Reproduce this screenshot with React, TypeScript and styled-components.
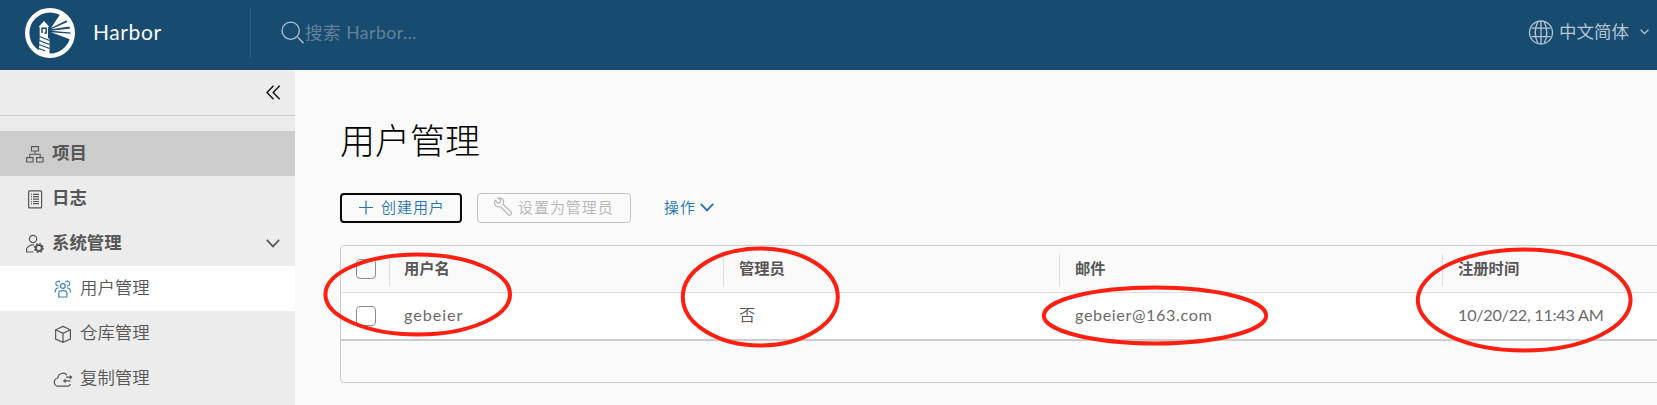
import React from 'react';
import styled, { createGlobalStyle, css } from 'styled-components';

const GlobalStyle = createGlobalStyle`
  *, *::before, *::after { box-sizing: border-box; }
  body {
    margin: 0;
    overflow: hidden;
    background: #fafafa;
    font-family: Lato, "Noto Sans CJK SC", sans-serif;
    color: #565656;
  }
`;

const Page = styled.div`
  position: relative;
  width: 100%;
  height: 405px;
  display: flex;
  flex-direction: column;
  overflow: hidden;
`;

const Header = styled.header`
  flex: none;
  height: 70px;
  display: flex;
  background: #184b70;
`;

const Brand = styled.div`
  width: 250px;
  display: flex;
  align-items: center;
  padding: 0 0 4px 25px;
  gap: 18px;
`;

const BrandName = styled.span`
  margin-top: -2px;
  font-size: 21px;
  line-height: 30px;
  letter-spacing: 0.6px;
  color: #fafafa;
`;

const Search = styled.div`
  flex: 1;
  height: 50px;
  margin-top: 8px;
  border-left: 1px solid #30608a;
  display: flex;
  align-items: center;
  padding: 0 0 1px 30px;
  font-size: 17.5px;
  color: #648299;
`;

const Placeholder = styled.span`
  line-height: 26px;
  white-space: pre;
  letter-spacing: 0.55px;
`;

const Language = styled.div`
  display: flex;
  align-items: center;
  padding: 0 8px 6px 0;
  font-size: 17.5px;
  line-height: 26px;
  color: #b5c5d1;
`;

const LanguageName = styled.span`
  margin: 0 11px 0 5px;
`;

const Body = styled.div`
  flex: 1;
  display: flex;
  min-height: 0;
`;

const Sidebar = styled.nav`
  flex: none;
  width: 295px;
  background: #ececec;
`;

const Collapse = styled.div`
  height: 46px;
  margin-bottom: 15px;
  border-bottom: 1px solid #cccccc;
  display: flex;
  align-items: center;
  justify-content: flex-end;
  padding-right: 14px;
  color: #111;
`;

const NavItem = styled.a<{ $level?: number; $state?: 'hover' | 'active' }>`
  height: 45px;
  display: flex;
  align-items: center;
  font-size: 17.4px;
  line-height: 26px;
  color: #565656;
  ${({ $level }) =>
    $level === 2
      ? css`padding-left: 52px; font-weight: 350;`
      : css`padding-left: 25px; font-weight: 700;`}
  ${({ $state }) => $state === 'hover' && css`background: #cccccc;`}
  ${({ $state }) => $state === 'active' && css`background: #ffffff;`}
`;

const NavIcon = styled.span<{ $blue?: boolean; $gap?: number }>`
  display: flex;
  width: 20px;
  margin-right: ${({ $gap = 7 }) => $gap}px;
  color: ${({ $blue }) => ($blue ? '#3b83c0' : '#565656')};
`;

const NavLabel = styled.span`
  flex: 1;
  padding-bottom: 1px;
`;

const NavCaret = styled.span`
  display: flex;
  padding-right: 15px;
`;

const Main = styled.main`
  flex: 1;
  min-width: 0;
  padding: 45px 0 0 45px;
`;

const Title = styled.h1`
  margin: 0;
  height: 50px;
  font-size: 35px;
  line-height: 50px;
  font-weight: 300;
  color: #000;
`;

const Toolbar = styled.div`
  display: flex;
  margin-top: 28px;
  height: 30px;
`;

const Button = styled.button<{ $kind?: 'focused' | 'disabled' | 'link' }>`
  height: 30px;
  display: flex;
  align-items: center;
  background: transparent;
  font-family: inherit;
  font-size: 15px;
  line-height: 24px;
  font-weight: 350;
  letter-spacing: 0.95px;
  border-radius: 4px;
  color: #2573b8;
  padding: 0 0 2px;
  ${({ $kind }) => $kind === 'focused' && css`
    width: 122px;
    border: 2px solid #0a0a0a;
    padding-left: 15px;
    gap: 6px;
  `}
  ${({ $kind }) => $kind === 'disabled' && css`
    width: 154px;
    margin-left: 15px;
    border: 1px solid #c1c1c1;
    padding-left: 15px;
    gap: 5px;
    color: #b5b5b5;
  `}
  ${({ $kind }) => $kind === 'link' && css`
    margin-left: 33px;
    border: 0;
    gap: 4px;
  `}
`;

const Grid = styled.div`
  height: 138px;
  margin-top: 22px;
  width: 1330px;
  border: 1px solid #cccccc;
  border-radius: 4px;
`;

const Row = styled.div<{ $head?: boolean }>`
  display: grid;
  grid-template-columns: 48px 334px 336px 383px 1fr;
  height: ${({ $head }) => ($head ? '47px' : '48px')};
  background: ${({ $head }) => ($head ? 'transparent' : '#ffffff')};
  border-bottom: ${({ $head }) => ($head ? '1px solid #dedede' : '2px solid #cccccc')};
  font-weight: ${({ $head }) => ($head ? 700 : 350)};
  font-size: ${({ $head }) => ($head ? '15.3px' : '16.2px')};
`;

const Check = styled.span`
  width: 20px;
  height: 20px;
  margin: 13px 0 0 15px;
  border: 1px solid #8c8c8c;
  border-radius: 4px;
`;

const HeadCell = styled.div`
  height: 32px;
  margin-top: 8px;
  border-left: 1px solid #dedede;
  padding-left: 15px;
  line-height: 28px;

  &:nth-child(2) { padding-left: 14px; }
`;

const Cell = styled.div<{ $spacing?: number }>`
  padding-left: 16px;
  line-height: 44px;
  letter-spacing: ${({ $spacing = 0 }) => $spacing}px;

  &:nth-child(2) { padding-left: 15px; }
`;

const Latin = styled.span`
  font-weight: 400;
  color: #6a6a6a;
`;

const Annotations = styled.svg`
  position: absolute;
  inset: 0;
  pointer-events: none;
`;

type IconProps = {
  w: number;
  h?: number;
  box?: string;
  stroke?: number;
  children: React.ReactNode;
};

const IconSvg = styled.svg`
  flex: none;
`;

const Icon = ({ w, h = w, box = '0 0 36 36', stroke = 2, children }: IconProps) => (
  <IconSvg width={w} height={h} viewBox={box} fill="none" stroke="currentColor" strokeWidth={stroke}>
    {children}
  </IconSvg>
);

const Logo = () => (
  <svg width="50" height="50" viewBox="0 0 50 50" fill="#fff">
    <circle cx="25" cy="25" r="22.8" fill="none" stroke="#fff" strokeWidth="4.4" />
    <path d="M26 20 L35 6.5 L43 11.5 Z M26 21.3 L43.5 13.5 L46 18.3 Z M26 22.8 L46 20.5 V24.5 Z M26 24.3 L46 25.8 L45.5 31.5 Z" />
    <path d="M14 18.5 L19 13 L24 18.5 L23 19.5 V30 L24.5 31 V47 H13.5 L14.7 30 V19.5 Z" />
    <path d="M17 25 V20.3 H21.2 V25 H19.5" fill="none" stroke="#184b70" strokeWidth="1.5" />
    <path d="M14.5 28.5 L24.5 32.5 M14.3 32.5 L24.5 36.5 M14 36.5 L24.5 40.5 M14 40.5 L20 43" stroke="#184b70" strokeWidth="1.2" />
  </svg>
);

const columns = ['用户名', '管理员', '邮件', '注册时间'];

const rings = [
  { cx: 417.7, cy: 294.5, rx: 92.3, ry: 40 },
  { cx: 760.3, cy: 297, rx: 77.5, ry: 48.5 },
  { cx: 1155, cy: 315.5, rx: 111.2, ry: 28 },
  { cx: 1524.2, cy: 300, rx: 106.4, ry: 50.5 },
];

export default function App() {
  return (
    <Page>
      <GlobalStyle />
      <Header>
        <Brand>
          <Logo />
          <BrandName>Harbor</BrandName>
        </Brand>
        <Search>
          <Icon w={24} box="0 0 24 24" stroke={1.3}>
            <g stroke="#b5c5d1">
              <circle cx="9.7" cy="9.7" r="8.6" />
              <path d="M16.8 16.3 L22.5 22.3" />
            </g>
          </Icon>
          <Placeholder>搜索 Harbor...</Placeholder>
        </Search>
        <Language>
          <Icon w={26} box="0 0 26 26" stroke={1.3}>
            <circle cx="13" cy="13.5" r="11.5" />
            <path d="M13 2 V25 M9.7 3 Q4.7 13.5 9.7 24 M16.3 3 Q21.3 13.5 16.3 24 M3.5 9.2 H22.5 M3.5 17.7 H22.5" />
          </Icon>
          <LanguageName>中文简体</LanguageName>
          <Icon w={9} h={6} box="0 0 9 6" stroke={1.3}>
            <path d="M0.6 0.8 L4.5 4.6 L8.4 0.8" />
          </Icon>
        </Language>
      </Header>
      <Body>
        <Sidebar>
          <Collapse>
            <Icon w={15} box="0 0 15 15" stroke={1.4}>
              <path d="M7.5 0.8 L1 7.5 L7.5 14.2 M13.7 0.8 L7.2 7.5 L13.7 14.2" />
            </Icon>
          </Collapse>
          <NavItem $state="hover">
            <NavIcon>
              <Icon w={20} box="0 0 20 20" stroke={1.1}>
                <path d="M6.5 2.6 H13.5 V7 H6.5 Z M1.6 13.6 H8 V18 H1.6 Z M11.6 13.6 H18 V18 H11.6 Z M10 7 V10.2 M4.8 13.6 V10.2 H15.2 V13.6" />
              </Icon>
            </NavIcon>
            <NavLabel>项目</NavLabel>
          </NavItem>
          <NavItem>
            <NavIcon>
              <Icon w={20} box="0 0 20 20" stroke={1.2}>
                <rect x="3.6" y="1.9" width="13" height="17" rx="1" />
                <path d="M6 5.3 H7 M6 7.7 H7 M6 10.1 H7 M6 12.5 H7 M6 14.7 H7 M8 5.3 H14 M8 7.7 H14 M8 10.1 H14 M8 12.5 H14 M8 14.7 H14" />
              </Icon>
            </NavIcon>
            <NavLabel>日志</NavLabel>
          </NavItem>
          <NavItem>
            <NavIcon>
              <Icon w={20} box="0 0 20 20" stroke={1.2}>
                <circle cx="8" cy="5" r="3.6" />
                <path d="M8.5 18 H1.6 V14.5 Q4.5 10.4 9 11" />
                <circle cx="13.8" cy="14" r="3" strokeWidth="2" />
                <circle cx="13.8" cy="14" r="4.4" strokeWidth="1.4" strokeDasharray="1.7 1.755" />
              </Icon>
            </NavIcon>
            <NavLabel>系统管理</NavLabel>
            <NavCaret>
              <Icon w={14} h={9} box="0 0 14 9" stroke={1.7}>
                <path d="M0.8 0.9 L7 7.4 L13.2 0.9" />
              </Icon>
            </NavCaret>
          </NavItem>
          <NavItem $level={2} $state="active">
            <NavIcon $blue $gap={8}>
              <Icon w={20} box="0 0 20 20" stroke={1.2}>
                <circle cx="10.8" cy="7" r="2.4" />
                <path d="M6.8 18 V14.2 Q6.8 11.7 10.8 11.7 Q14.8 11.7 14.8 14.2 V18 Z M8 3.2 A2.3 2.3 0 1 0 6.4 6.8 M13.6 3.2 A2.3 2.3 0 1 1 15.2 6.8 M6.4 8.8 Q3.1 9 3.1 13.4 M15.2 8.8 Q18.5 9 18.5 13.4" />
              </Icon>
            </NavIcon>
            <NavLabel>用户管理</NavLabel>
          </NavItem>
          <NavItem $level={2}>
            <NavIcon $gap={8}>
              <Icon w={20} box="0 0 20 20" stroke={1.2}>
                <path d="M11 2.4 L18.4 5.8 V15 L11 18.4 L3.6 15 V5.8 Z M3.6 5.8 L11 9.4 L18.4 5.8 M11 9.4 V18.4" />
              </Icon>
            </NavIcon>
            <NavLabel>仓库管理</NavLabel>
          </NavItem>
          <NavItem $level={2}>
            <NavIcon $gap={8}>
              <Icon w={21} h={20} box="0 0 21 20" stroke={1.2}>
                <path d="M15 6.2 A5.1 5.1 0 0 0 5.9 9 A4.2 4.2 0 0 0 5.4 17.2 H15.5 Q18 17.2 18.3 15 M14 8.2 H19.5 M18.5 11.9 H12" />
                <path d="M17.8 5.9 L20.6 8.2 L17.8 10.5 Z M13.6 9.6 L10.8 11.9 L13.6 14.2 Z" fill="currentColor" stroke="none" />
              </Icon>
            </NavIcon>
            <NavLabel>复制管理</NavLabel>
          </NavItem>
        </Sidebar>
        <Main>
          <Title>用户管理</Title>
          <Toolbar>
            <Button $kind="focused">
              <Icon w={18} box="0 0 18 18" stroke={1.2}>
                <path d="M9 2.5 V16.5 M2 9.5 H16" />
              </Icon>
              创建用户
            </Button>
            <Button $kind="disabled">
              <Icon w={20} box="0 0 20 20" stroke={1.2}>
                <path d="M2.2 3.2 L5 6 L7.2 5.4 L7.6 3 L5 1.1 Q8.7 0.2 10.2 3.1 Q11 5.2 10.1 7.3 L18.2 15.2 Q19 16.5 17.9 17.6 Q16.7 18.7 15.3 17.7 L7.5 9.7 Q4.6 10.6 2.6 8.7 Q0.7 6.7 2.2 3.2 Z" />
              </Icon>
              设置为管理员
            </Button>
            <Button $kind="link">
              操作
              <Icon w={14} h={9} box="0 0 14 9" stroke={1.9}>
                <path d="M0.8 0.9 L7 7.4 L13.2 0.9" />
              </Icon>
            </Button>
          </Toolbar>
          <Grid>
            <Row $head>
              <Check />
              {columns.map((name) => (
                <HeadCell key={name}>{name}</HeadCell>
              ))}
            </Row>
            <Row>
              <Check />
              <Cell $spacing={0.95}><Latin>gebeier</Latin></Cell>
              <Cell>否</Cell>
              <Cell $spacing={0.6}><Latin>gebeier@163.com</Latin></Cell>
              <Cell $spacing={-0.25}><Latin>10/20/22, 11:43 AM</Latin></Cell>
            </Row>
          </Grid>
        </Main>
      </Body>
      <Annotations width="1657" height="405" fill="none" stroke="#ff1f10" strokeWidth="4">
        {rings.map((ring) => (
          <ellipse key={ring.cx} {...ring} />
        ))}
      </Annotations>
    </Page>
  );
}
